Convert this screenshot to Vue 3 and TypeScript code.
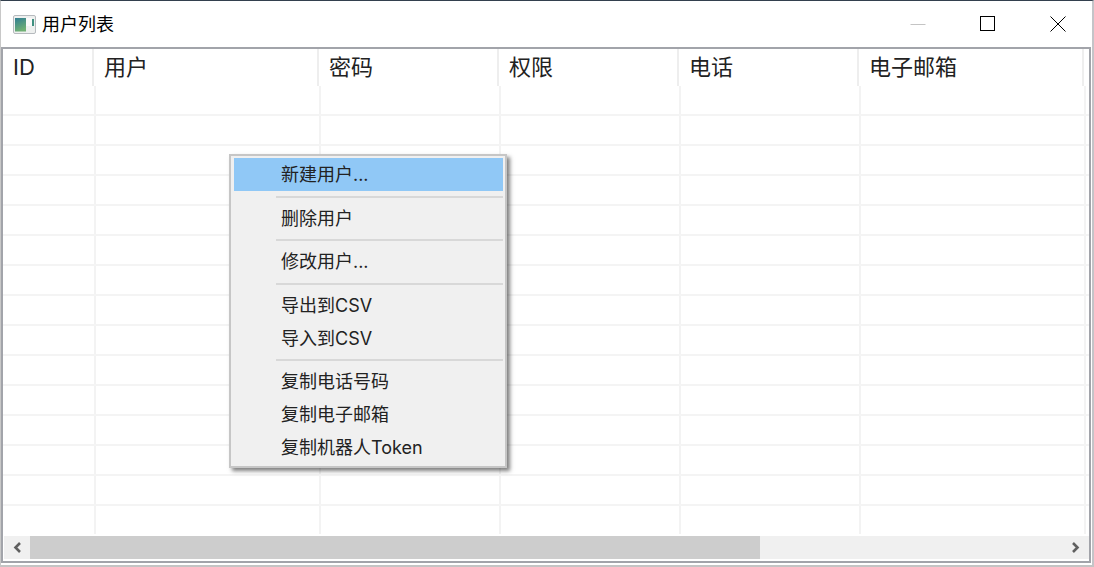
<script setup lang="ts">
const columns = [
  { label: 'ID', head: 91, cell: 93 },
  { label: '用户', head: 225, cell: 225 },
  { label: '密码', head: 180, cell: 180 },
  { label: '权限', head: 180, cell: 180 },
  { label: '电话', head: 180, cell: 180 },
  { label: '电子邮箱', head: 225, cell: 225 },
]
const rows = Array.from({ length: 15 }, (_, i) => i)
type Entry = { text: string; active?: boolean; sep?: boolean }
const menu: Entry[] = [
  { text: '新建用户...', active: true },
  { text: '', sep: true },
  { text: '删除用户' },
  { text: '', sep: true },
  { text: '修改用户...' },
  { text: '', sep: true },
  { text: '导出到CSV' },
  { text: '导入到CSV' },
  { text: '', sep: true },
  { text: '复制电话号码' },
  { text: '复制电子邮箱' },
  { text: '复制机器人Token' },
]
</script>

<template>
  <div class="window">
    <header class="titlebar">
      <svg class="appicon" width="23" height="19" viewBox="0 0 23 19">
        <defs>
          <linearGradient id="g" x1="0" y1="0" x2="0.35" y2="1">
            <stop offset="0" stop-color="#2f7d92" />
            <stop offset="1" stop-color="#6fb074" />
          </linearGradient>
        </defs>
        <rect x="0.5" y="0.5" width="22" height="18" rx="1.5" fill="#eef0ef" stroke="#b6babe" />
        <rect x="2" y="3" width="11" height="13.5" fill="url(#g)" />
        <rect x="13" y="3" width="6" height="8" fill="#fafafa" />
        <rect x="19" y="4" width="2" height="7" fill="#3f9080" />
      </svg>
      <span class="title">用户列表</span>
      <div class="controls">
        <button class="ctl"><svg width="16" height="16" viewBox="0 0 16 16"><path d="M0.5 8.5h15" stroke="#c4c4c4" fill="none" /></svg></button>
        <button class="ctl"><svg width="16" height="16" viewBox="0 0 16 16"><rect x="0.5" y="0.5" width="14" height="14" stroke="#000" fill="none" /></svg></button>
        <button class="ctl"><svg width="16" height="16" viewBox="0 0 16 16"><path d="M0.5 0.5l15 15M15.5 0.5l-15 15" stroke="#000" fill="none" /></svg></button>
      </div>
    </header>

    <main class="body">
      <div class="table">
        <div class="head">
          <div v-for="c in columns" :key="c.label" class="hcell" :style="{ width: c.head + 'px' }">{{ c.label }}</div>
        </div>
        <div class="grid">
          <div v-for="r in rows" :key="r" class="row">
            <div v-for="c in columns" :key="c.label" class="cell" :style="{ width: c.cell + 'px' }"></div>
          </div>
        </div>
      </div>
      <div class="scrollbar">
        <svg class="arrow" width="16" height="23" viewBox="0 0 16 23"><path d="M11 7L6.5 11.5 11 16" stroke="#606060" stroke-width="2.6" fill="none" /></svg>
        <div class="track"><div class="thumb"></div></div>
        <svg class="arrow" width="16" height="23" viewBox="0 0 16 23"><path d="M5 7L9.5 11.5 5 16" stroke="#606060" stroke-width="2.6" fill="none" /></svg>
      </div>

      <div class="menu">
        <template v-for="(m, i) in menu" :key="i">
          <div v-if="m.sep" class="sep"></div>
          <div v-else class="item" :class="{ active: m.active }">{{ m.text }}</div>
        </template>
      </div>
    </main>
  </div>
</template>

<style>
html, body { margin: 0; background: #fff; overflow: hidden; }
</style>

<style scoped>
.window {
  width: 1094px;
  height: 567px;
  box-sizing: border-box;
  background: #fff;
  display: flex;
  flex-direction: column;
  font-family: Inter, "Noto Sans CJK SC", sans-serif;
  color: #1a1a1a;
  overflow: hidden;
  border-top: 1px solid #33404e;
  border-left: 1px solid #c8c8c8;
  border-right: 2px solid #c4c4c8;
  border-bottom: 2px solid #c4c4c4;
}
.titlebar {
  height: 46px;
  display: flex;
  align-items: center;
  padding-left: 12px;
  flex: none;
}
.appicon { margin-right: 6px; }
.title { font-size: 18px; color: #000; margin-bottom: 2px; }
.controls { margin-left: auto; margin-right: -1px; display: flex; }
.ctl {
  width: 70px;
  height: 46px;
  border: 0;
  background: none;
  padding: 0;
  display: flex;
  align-items: center;
  justify-content: center;
}
.body {
  position: relative;
  flex: 1;
  margin: 0 1px 2px 0;
  border: 2px solid #a2a4aa;
  display: flex;
  flex-direction: column;
  min-height: 0;
}
.table { flex: 1; overflow: hidden; min-height: 0; }
.head { display: flex; height: 37px; }
.hcell {
  box-sizing: border-box;
  flex: none;
  font-size: 22px;
  line-height: 36px;
  padding-left: 10px;
  color: #222;
  border-right: 2px solid #eeeeee;
}
.grid { display: flex; flex-direction: column; }
.row { display: flex; height: 30px; flex: none; box-sizing: border-box; border-bottom: 2px solid #f4f4f4; }
.cell { box-sizing: border-box; flex: none; border-right: 2px solid #f3f3f3; }
.scrollbar {
  flex: none;
  height: 23px;
  margin: 2px 0 2px 1px;
  background: #f0f0f0;
  display: flex;
  align-items: center;
}
.arrow { flex: none; width: 26px; }
.track { flex: 1; height: 23px; }
.thumb { width: 730px; height: 23px; background: #cdcdcd; }
.menu {
  position: absolute;
  left: 226px;
  top: 105px;
  width: 278px;
  height: 314px;
  box-sizing: border-box;
  background: #f0f0f0;
  border: 2px solid #c6c6c6;
  padding: 2px 2px 2px 3px;
  box-shadow: 3px 3px 4px rgba(0, 0, 0, 0.5);
  font-size: 18px;
  color: #222;
}
.item {
  height: 33px;
  line-height: 33px;
  padding-left: 47px;
}
.item.active { background: #90c8f6; }
.sep {
  height: 2px;
  margin: 4.5px 0 4px 42px;
  background: #d8d8d8;
}
</style>
